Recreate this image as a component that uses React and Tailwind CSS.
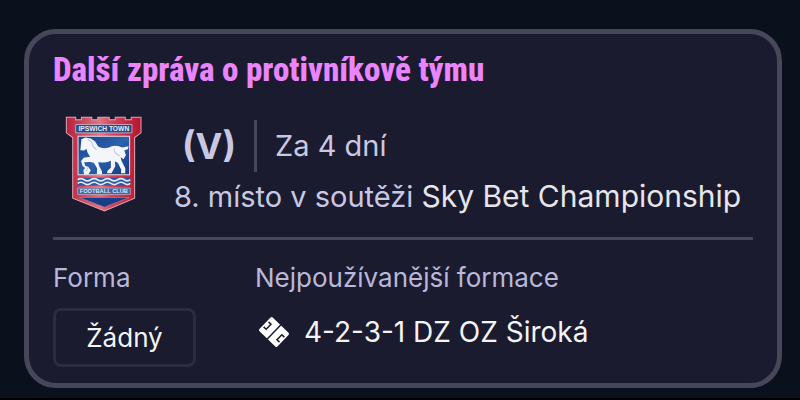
function Crest() {
  return (
    <svg viewBox="44 34 230 286" className="h-24 w-[77px] shrink-0" role="img" aria-label="Ipswich Town">
      <defs>
        <linearGradient id="edge" x1="0" y1="0" x2="1" y2="0">
          <stop offset="0" stopColor="#b81f3c" />
          <stop offset="0.45" stopColor="#e27484" />
          <stop offset="0.6" stopColor="#d9455c" />
          <stop offset="1" stopColor="#b3152f" />
        </linearGradient>
        <linearGradient id="field" x1="0" y1="0" x2="1" y2="1">
          <stop offset="0" stopColor="#17418c" />
          <stop offset="0.5" stopColor="#2d62ad" />
          <stop offset="1" stopColor="#123a80" />
        </linearGradient>
      </defs>
      <path
        d="M48 37H76V45H93V37H124V45H142V37H176V45H194V37H224V45H242V37H271V84L252 98V279L162 317L67 279V98L48 84Z"
        fill="url(#edge)"
        stroke="#d9aab4"
        strokeWidth="3"
      />
      <path d="M76 59H244V84H76Z" fill="#244b8c" stroke="#dfd3df" strokeWidth="2" />
      <text x="160" y="79" textAnchor="middle" fontSize="20" fontWeight="700" fill="#e8edf7" className="font-['Liberation_Sans']">IPSWICH TOWN</text>
      <path d="M83 94H237V209H83Z" fill="url(#field)" stroke="#e6dce6" strokeWidth="3" />
      <path
        d="M93 103L105 98L121 101L134 110L143 125C157 133 172 130 184 124C195 120 207 124 215 128L234 124L232 132L221 137L226 150L219 163L210 157L213 168L224 190V205H211L212 194L202 174L193 169L194 184L183 205H169L171 197L181 188L181 167C166 174 150 172 143 172L147 185L154 198L155 207H139L140 190L130 173L119 171L101 172L105 183L113 185L121 196L114 208H101L99 196L104 189L96 182L92 168L100 158L119 155L112 144L108 132L101 137L90 136L91 123Z"
        fill="#f5f6fb"
      />
      <path d="M112 103L123 111L129 126L138 134M190 131L194 144L207 153M113 187L107 199" fill="none" stroke="#b9c5df" strokeWidth="3" />
      <path d="M82 218H239V241H82Z" fill="#2856a0" />
      <path
        d="M82 224Q91 217 101 224T121 224T141 224T161 224T181 224T201 224T221 224T239 224M82 235Q91 228 101 235T121 235T141 235T161 235T181 235T201 235T221 235T239 235"
        fill="none"
        stroke="#e3e8f3"
        strokeWidth="5"
      />
      <path d="M82 249H239V268H82Z" fill="#4064a2" stroke="#d5b7c8" strokeWidth="2" />
      <text x="160" y="265" textAnchor="middle" fontSize="17" fontWeight="700" fill="#dce4f2" className="font-['Liberation_Sans']">FOOTBALL CLUB</text>
      <path d="M86 277H236L162 306Z" fill="#173f87" stroke="#cf6f85" strokeWidth="2" />
    </svg>
  );
}

function PitchIcon() {
  return (
    <svg viewBox="0 0 32 32" className="size-8 shrink-0" aria-hidden="true">
      <g transform="rotate(44 16 16)">
        <rect x="3.5" y="6.5" width="25" height="19" rx="1.5" fill="#fff" />
        <path d="M16 6V26M5 12.500H8.500V19.500H5M27 12.500H23.500V19.500H27" fill="none" stroke="#1b1b2f" strokeWidth="1.5" />
      </g>
    </svg>
  );
}

export default function App() {
  return (
    <main className="min-h-screen border-b-2 border-black bg-[#0a101c] pt-[29px] pr-[18px] pb-2 pl-6 font-[Inter,sans-serif]">
      <section className="rounded-[32px] border-5 border-[#47465b] bg-[#1b1b2f] px-6 pt-4 pb-4">
        <h2 className="font-['Roboto_Condensed','Open_Sans_Condensed',Roboto,sans-serif] text-[33px] leading-10 font-extrabold whitespace-nowrap text-[#eb84ff]">
          Další zpráva o protivníkově týmu
        </h2>

        <div className="flex items-start gap-8 border-b-3 border-[#47465b] pt-[26px] pb-4 pl-3">
          <Crest />
          <div className="pt-1 whitespace-nowrap">
            <div className="flex h-[52px] items-center pl-2 text-[#c9c8e2]">
              <span className="text-[36px] leading-[52px] font-bold">(V)</span>
              <span className="ml-[18px] h-[52px] w-[3px] bg-[#47465b]" />
              <span className="ml-[18px] text-[29px]">Za 4 dní</span>
            </div>
            <p className="text-[29px] leading-[48px] text-[#c9c8e2]">
              8. místo v soutěži <span className="text-[30px] text-[#e6e6ea]">Sky Bet Championship</span>
            </p>
          </div>
        </div>

        <dl className="flex pt-5 whitespace-nowrap">
          <div className="w-[202px]">
            <dt className="text-[26px] leading-9 text-[#b9b8d8]">Forma</dt>
            <dd className="mt-3 flex h-[59px] w-[143px] items-center justify-center rounded-lg border-3 border-[#2c2c40] text-[26px] text-[#f4f4f4]">
              Žádný
            </dd>
          </div>
          <div>
            <dt className="text-[26px] leading-9 text-[#b9b8d8]">Nejpoužívanější formace</dt>
            <dd className="mt-3 flex h-12 items-center gap-3.5 pl-[3px] text-[28px] text-[#f4f4f4]">
              <PitchIcon />
              4-2-3-1 DZ OZ Široká
            </dd>
          </div>
        </dl>
      </section>
    </main>
  );
}
